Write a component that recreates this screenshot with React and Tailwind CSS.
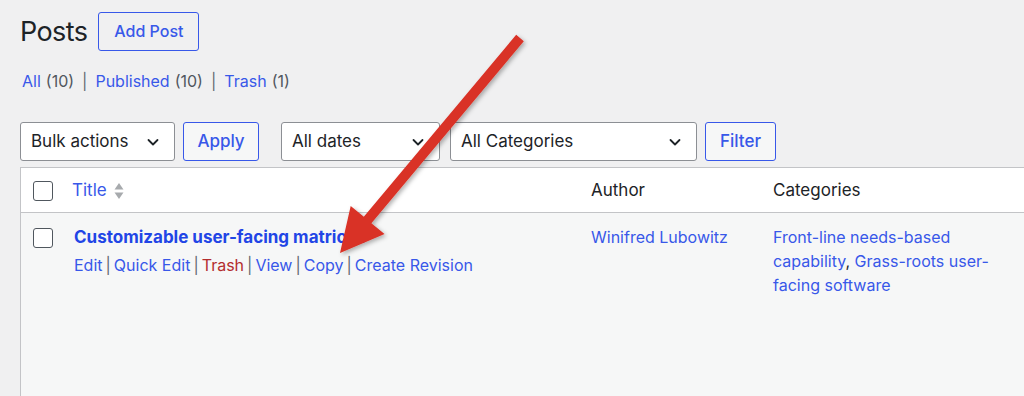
import React from "react";

const font = { fontFamily: 'Inter, "Noto Sans", "Liberation Sans", sans-serif' };

function Chevron() {
  return (
    <svg width="14" height="14" viewBox="0 0 14 14" className="shrink-0">
      <path d="M2.5 5 L7 9.5 L11.5 5" fill="none" stroke="#1d2327" strokeWidth="1.8" strokeLinecap="round" strokeLinejoin="round" />
    </svg>
  );
}

function Select({ label, w }) {
  return (
    <div className={`${w} h-[39px] flex items-center justify-between bg-white border border-[#8c8f94] rounded-[3px] pl-[10px] pr-[14px] text-[17px] text-[#1d2327]`}>
      <span>{label}</span>
      <Chevron />
    </div>
  );
}

function Btn({ label, w }) {
  return (
    <div className={`${w} h-[39px] flex items-center justify-center border border-[#3858e9] rounded-[3px] text-[17px] text-[#3858e9] font-medium bg-[#f6f7f7]`}>
      {label}
    </div>
  );
}

function Checkbox() {
  return <div className="w-[20px] h-[20px] border-[1.5px] border-[#50575e] rounded-[3px] bg-white" />;
}

function Sep() {
  return <span className="text-[#646970]">|</span>;
}

export default function App() {
  return (
    <div className="relative w-[1024px] h-[396px] overflow-hidden bg-[#f0f0f1]" style={font}>
      <div className="pl-[20px]">
        <div className="flex items-center h-[38px] mt-[12px] gap-[11px]">
          <h1 className="text-[27px] text-[#1d2327] leading-none tracking-[-0.6px]">Posts</h1>
          <div className="w-[101px] h-[39px] flex items-center justify-center border border-[#3858e9] rounded-[3px] text-[16px] text-[#3858e9] font-medium">
            Add Post
          </div>
        </div>
        <div className="mt-[20px] ml-[2px] text-[16px] text-[#50575e] flex items-center h-[22px]">
          <span className="text-[#3858e9]">All</span>
          <span className="ml-[5px]">(10)</span>
          <span className="mx-[8px] text-[#646970]">|</span>
          <span className="text-[#3858e9]">Published</span>
          <span className="ml-[5px]">(10)</span>
          <span className="mx-[8px] text-[#646970]">|</span>
          <span className="text-[#3858e9]">Trash</span>
          <span className="ml-[5px]">(1)</span>
        </div>
        <div className="flex items-center mt-[30px]">
          <Select label="Bulk actions" w="w-[155px]" />
          <div className="w-[8px]" />
          <Btn label="Apply" w="w-[76px]" />
          <div className="w-[22px]" />
          <Select label="All dates" w="w-[159px]" />
          <div className="w-[10px]" />
          <Select label="All Categories" w="w-[247px]" />
          <div className="w-[8px]" />
          <Btn label="Filter" w="w-[71px]" />
        </div>
        <div className="mt-[6px] border-l border-t border-[#c3c4c7] w-[1100px]">
          <div className="flex h-[45px] pt-[2px] bg-white border-b border-[#c3c4c7] items-center text-[17px] text-[#1d2327]">
            <div className="w-[41px] pl-[12px] shrink-0"><Checkbox /></div>
            <div className="w-[519px] shrink-0 pl-[10px] flex items-center gap-[7px]">
              <span className="text-[#3858e9]">Title</span>
              <svg width="10" height="18" viewBox="0 0 10 18">
                <path d="M5 1 L9.5 7.5 L0.5 7.5 Z" fill="#a7aaad" />
                <path d="M5 17 L9.5 10.5 L0.5 10.5 Z" fill="#a7aaad" />
              </svg>
            </div>
            <div className="w-[182px] shrink-0 pl-[10px]">Author</div>
            <div className="pl-[10px]">Categories</div>
          </div>
          <div className="flex h-[200px] bg-[#f6f7f7]">
            <div className="w-[41px] pl-[12px] pt-[15px] shrink-0"><Checkbox /></div>
            <div className="w-[519px] shrink-0 pl-[12px] pt-[12px]">
              <div className="text-[17px] font-bold text-[#2145e6] leading-[24px]">Customizable user-facing matrices</div>
              <div className="mt-[5px] text-[16px] leading-[22px] flex items-center gap-[3px]">
                <span className="text-[#3858e9]">Edit</span><Sep />
                <span className="text-[#3858e9]">Quick Edit</span><Sep />
                <span className="text-[#b32d2e]">Trash</span><Sep />
                <span className="text-[#3858e9]">View</span><Sep />
                <span className="text-[#3858e9]">Copy</span><Sep />
                <span className="text-[#3858e9]">Create Revision</span>
              </div>
            </div>
            <div className="w-[182px] shrink-0 pl-[10px] pt-[12px] text-[16px] leading-[24px] text-[#3858e9]">Winifred Lubowitz</div>
            <div className="w-[235px] pl-[10px] pt-[12px] text-[16px] leading-[24px] text-[#3858e9]">
              Front-line needs-based capability<span className="text-[#1d2327]">,</span> Grass-roots user-facing software
            </div>
          </div>
        </div>
      </div>
      <svg className="absolute inset-0 pointer-events-none" width="1024" height="396" viewBox="0 0 1024 396">
        <defs>
          <filter id="sh" x="-20%" y="-20%" width="140%" height="140%">
            <feDropShadow dx="2" dy="2" stdDeviation="2" floodColor="#000" floodOpacity="0.3" />
          </filter>
        </defs>
        <polygon
          points="516.2,34.8 523.8,41.2 371.4,223.2 384.5,234.1 340,253 350.7,205.9 363.8,216.8"
          fill="#d93025"
          filter="url(#sh)"
        />
      </svg>
    </div>
  );
}
